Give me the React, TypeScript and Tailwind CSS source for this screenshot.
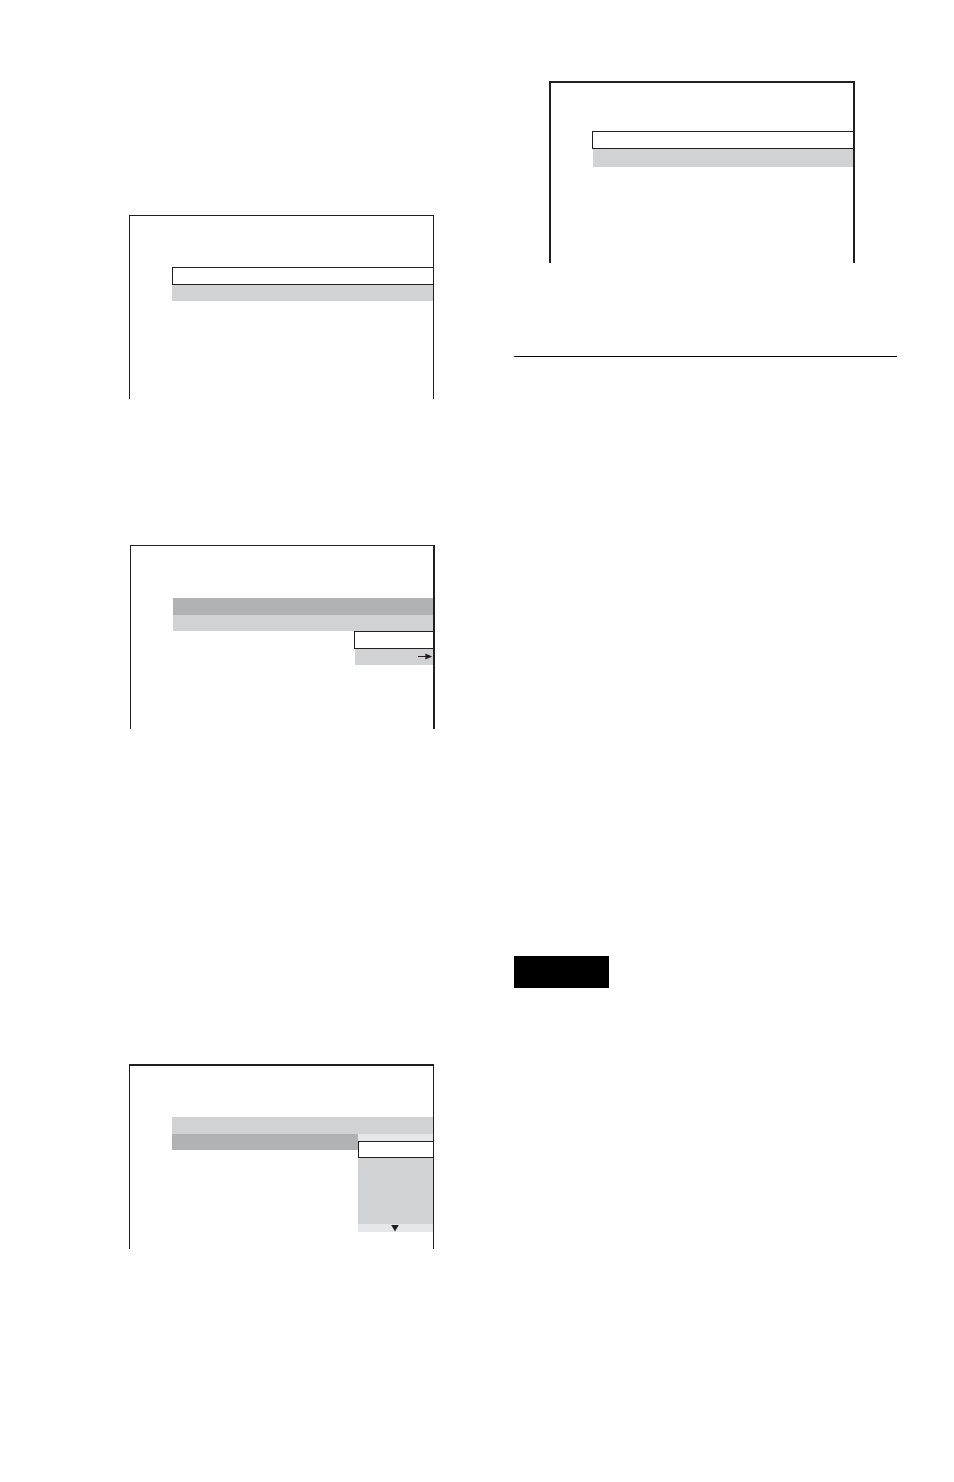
import type { ReactNode } from "react";

function Screen({ className, children }: { className: string; children: ReactNode }) {
  return (
    <section className={`flex flex-col border-[#231f20] pl-[42px] ${className}`}>
      {children}
    </section>
  );
}

function SelectedRow({ className }: { className: string }) {
  return <li className={`border-y border-l border-[#231f20] bg-white ${className}`} />;
}

function RightArrow() {
  return (
    <svg width="15" height="8" viewBox="0 0 15 8" aria-hidden="true">
      <path d="M0 3.5H9" stroke="#231f20" strokeWidth="1" />
      <path d="M7.4 0.6L14.2 3.5L7.4 6.4Z" fill="#231f20" />
    </svg>
  );
}

function DownArrow() {
  return (
    <svg width="9" height="8" viewBox="0 0 9 8" aria-hidden="true">
      <path d="M0.2 1H7.8L4 7.6Z" fill="#231f20" />
    </svg>
  );
}

export default function App() {
  return (
    <main className="grid min-h-screen grid-cols-[385fr_383fr] bg-white pr-[57px] pb-[233px] pl-[129px]">
      <div className="flex flex-col pt-[215px]">
        <Screen className="mr-20 border-x border-t pt-[51px] pb-[98px]">
          <ul>
            <SelectedRow className="h-[18px]" />
            <li className="h-4 bg-[#d1d2d4]" />
          </ul>
        </Screen>

        <Screen className="mt-[146px] mr-[79px] ml-px border-t border-r-2 border-l pt-[52px] pb-16">
          <ul>
            <li className="h-[17px] bg-[#b1b2b4]" />
            <li className="h-4 bg-[#d1d2d4]" />
          </ul>
          <ul className="w-[79px] self-end">
            <SelectedRow className="h-[18px]" />
            <li className="ml-px flex h-4 items-center justify-end bg-[#d1d2d4]">
              <RightArrow />
            </li>
          </ul>
        </Screen>

        <Screen className="mt-[335px] mr-20 border-x border-t-2 pt-[51px] pb-[17px]">
          <div className="h-[17px] bg-[#d1d2d4]" />
          <div className="flex items-start">
            <div className="h-4 grow bg-[#b1b2b4]" />
            <ul className="w-[75px] bg-[#e6e7e8] pt-[7px]">
              <SelectedRow className="h-[17px]" />
              <li className="h-[66px] bg-[#d1d2d4]" />
              <li className="flex h-2 items-center justify-center">
                <DownArrow />
              </li>
            </ul>
          </div>
        </Screen>
      </div>

      <div className="flex flex-col pt-[81px]">
        <Screen className="mr-[42px] ml-[35px] border-x-2 border-t-2 pt-12 pb-24">
          <ul className="-ml-px">
            <SelectedRow className="h-[18px]" />
            <li className="ml-px h-[18px] bg-[#d1d2d4]" />
          </ul>
        </Screen>
        <hr className="mt-[93px] border-t border-black" />
        <div className="mt-[599px] h-8 w-[95px] bg-black" />
      </div>
    </main>
  );
}
